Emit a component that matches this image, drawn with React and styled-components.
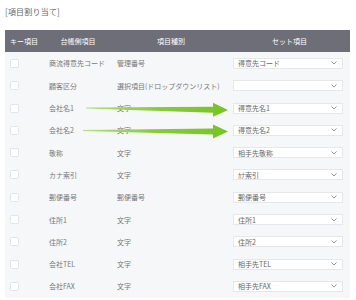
import React from "react";
import styled, { createGlobalStyle } from "styled-components";

const GlobalStyle = createGlobalStyle`
  body {
    margin: 0;
    background: #fff;
    font-family: "Noto Sans CJK JP", "Noto Sans", sans-serif;
  }
`;

const Page = styled.div`
  position: relative;
  width: 356px;
  height: 300px;
  padding: 0 6px 0 5px;
  box-sizing: border-box;
  overflow: hidden;
`;

const Title = styled.div`
  height: 30px;
  padding-top: 6px;
  box-sizing: border-box;
  font-size: 8px;
  line-height: 11px;
  color: #666;
  letter-spacing: 0.2px;
`;

const Table = styled.div`
  display: grid;
  grid-template-columns: 38px 70px 116px 1fr;
  grid-auto-rows: 22.3px;
  background: #f6f7f9;
`;

const HeadCell = styled.div`
  height: 22px;
  display: flex;
  align-items: center;
  justify-content: center;
  background: #6e6e78;
  color: #fff;
  font-size: 7px;
`;

const Cell = styled.div`
  display: flex;
  align-items: center;
  padding-left: ${(p) => p.$pad || 0}px;
  font-size: 7px;
  color: #777;
  white-space: nowrap;
`;

const Check = styled.span`
  width: 7px;
  height: 7px;
  margin-left: 5px;
  background: #fff;
  border: 1px solid #e2e4e8;
  border-radius: 1.5px;
`;

const Select = styled.div`
  width: 110px;
  height: 11px;
  box-sizing: border-box;
  display: flex;
  align-items: center;
  justify-content: space-between;
  padding: 0 5px 0 4px;
  background: #fff;
  border: 1px solid #e6e7eb;
  font-size: 7px;
  color: #666;
`;

const Chevron = () => (
  <svg width="6" height="4" viewBox="0 0 6 4">
    <path d="M0.5 0.5 L3 3 L5.5 0.5" fill="none" stroke="#888" strokeWidth="0.9" />
  </svg>
);

const Arrows = styled.svg`
  position: absolute;
  left: 0;
  top: 0;
  pointer-events: none;
`;

const rows = [
  ["商流得意先コード", "管理番号", "得意先コード"],
  ["顧客区分", "選択項目(ドロップダウンリスト)", ""],
  ["会社名1", "文字", "得意先名1"],
  ["会社名2", "文字", "得意先名2"],
  ["敬称", "文字", "相手先敬称"],
  ["カナ索引", "文字", "ｶﾅ索引"],
  ["郵便番号", "郵便番号", "郵便番号"],
  ["住所1", "文字", "住所1"],
  ["住所2", "文字", "住所2"],
  ["会社TEL", "文字", "相手先TEL"],
  ["会社FAX", "文字", "相手先FAX"],
];

function Arrow({ x1, y1, x2, y2 }) {
  const head = 15;
  const hx = x2 - head;
  const hy = y1 + ((y2 - y1) * (hx - x1)) / (x2 - x1);
  const points = [
    [x1, y1 - 0.4],
    [hx, hy - 3],
    [hx, hy - 7],
    [x2, y2],
    [hx, hy + 7],
    [hx, hy + 3],
    [x1, y1 + 0.4],
  ]
    .map((p) => p.join(","))
    .join(" ");
  return <polygon points={points} fill="url(#arrowGreen)" />;
}

export default function App() {
  return (
    <Page>
      <GlobalStyle />
      <Title>[項目割り当て]</Title>
      <Table>
        <HeadCell>キー項目</HeadCell>
        <HeadCell>台帳側項目</HeadCell>
        <HeadCell>項目種別</HeadCell>
        <HeadCell>セット項目</HeadCell>
        {rows.map(([name, kind, set]) => (
          <React.Fragment key={name}>
            <Cell>
              <Check />
            </Cell>
            <Cell $pad={6}>{name}</Cell>
            <Cell $pad={4}>{kind}</Cell>
            <Cell $pad={4}>
              <Select>
                <span>{set}</span>
                <Chevron />
              </Select>
            </Cell>
          </React.Fragment>
        ))}
      </Table>
      <Arrows width="356" height="300" viewBox="0 0 356 300">
        <defs>
          <linearGradient id="arrowGreen" x1="0" y1="0" x2="1" y2="0">
            <stop offset="0" stopColor="#b4e07c" />
            <stop offset="0.5" stopColor="#86cc36" />
            <stop offset="1" stopColor="#76c424" />
          </linearGradient>
        </defs>
        <Arrow x1={86} y1={108} x2={228} y2={110} />
        <Arrow x1={83} y1={130.5} x2={228} y2={131.5} />
      </Arrows>
    </Page>
  );
}
